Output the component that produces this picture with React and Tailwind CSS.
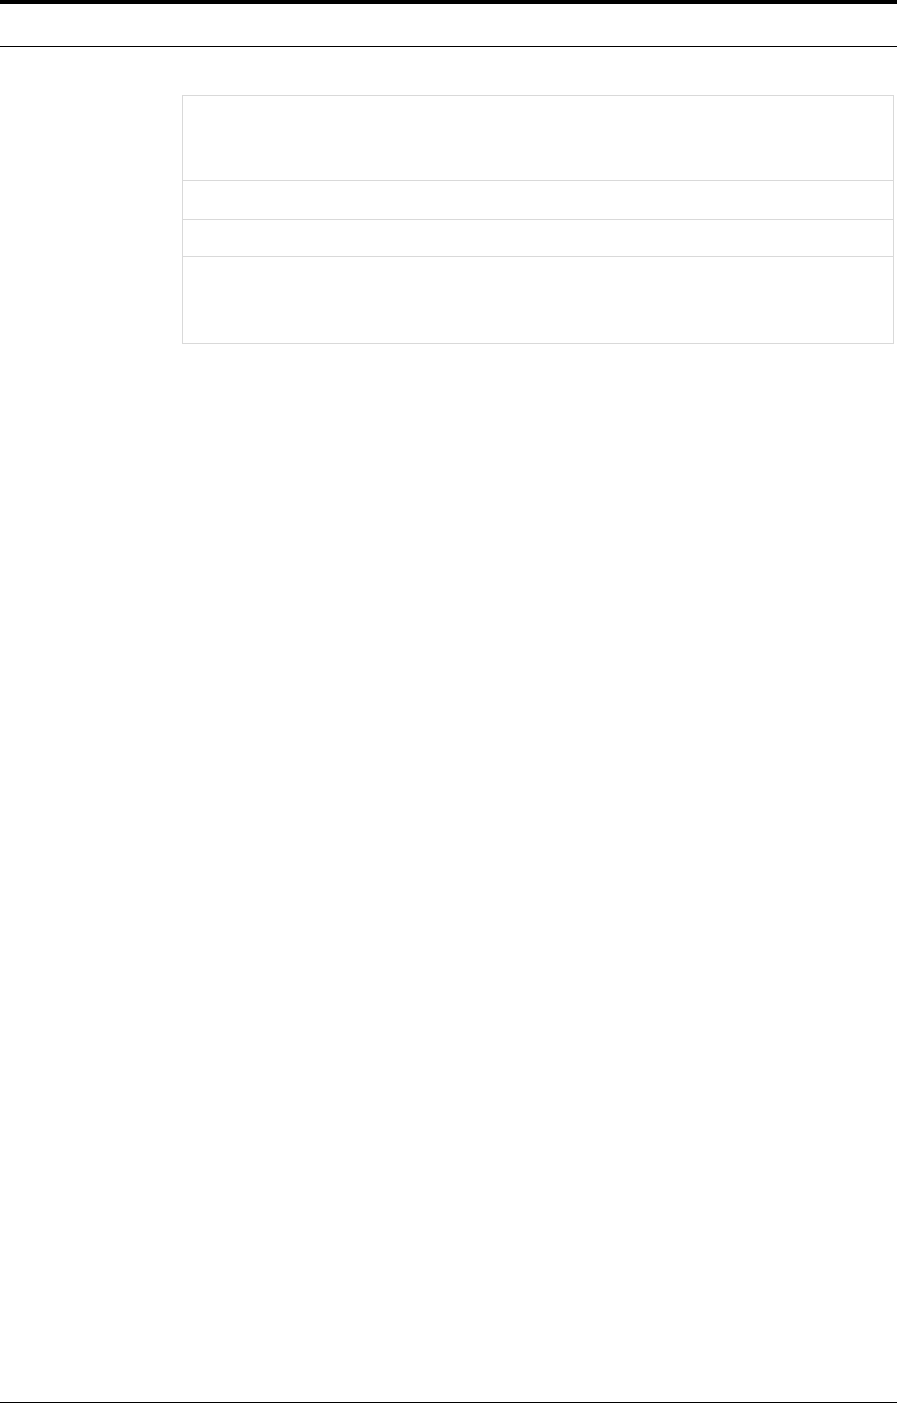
export default function App() {
  return (
    <div className="w-[897px] h-[1403px] flex flex-col bg-white" style={{ fontFamily: '"Liberation Sans", Arial, sans-serif' }}>
      <div className="h-1 w-full bg-black" />
      <div className="h-[42px]" />
      <div className="h-px w-full bg-black" />
      <div className="pt-[48px] pl-[182px]">
        <div className="w-[712px] border border-[#d9d9d9] flex flex-col">
          <div className="h-[85px] border-b border-[#d9d9d9]" />
          <div className="h-[39px] border-b border-[#d9d9d9]" />
          <div className="h-[37px] border-b border-[#d9d9d9]" />
          <div className="h-[86px]" />
        </div>
      </div>
      <div className="flex-1" />
      <div className="h-px w-full bg-black" />
    </div>
  );
}
